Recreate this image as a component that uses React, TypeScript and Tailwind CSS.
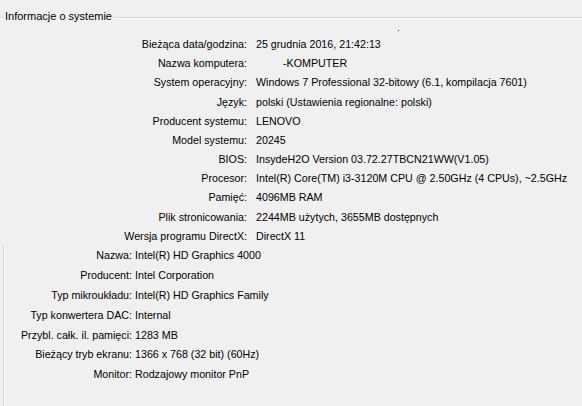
const systemRows: [string, string][] = [
  ["Bieżąca data/godzina:", "25 grudnia 2016, 21:42:13"],
  ["Nazwa komputera:", "-KOMPUTER"],
  ["System operacyjny:", "Windows 7 Professional 32-bitowy (6.1, kompilacja 7601)"],
  ["Język:", "polski (Ustawienia regionalne: polski)"],
  ["Producent systemu:", "LENOVO"],
  ["Model systemu:", "20245"],
  ["BIOS:", "InsydeH2O Version 03.72.27TBCN21WW(V1.05)"],
  ["Procesor:", "Intel(R) Core(TM) i3-3120M CPU @ 2.50GHz (4 CPUs), ~2.5GHz"],
  ["Pamięć:", "4096MB RAM"],
  ["Plik stronicowania:", "2244MB użytych, 3655MB dostępnych"],
  ["Wersja programu DirectX:", "DirectX 11"],
];

const displayRows: [string, string][] = [
  ["Nazwa:", "Intel(R) HD Graphics 4000"],
  ["Producent:", "Intel Corporation"],
  ["Typ mikroukładu:", "Intel(R) HD Graphics Family"],
  ["Typ konwertera DAC:", "Internal"],
  ["Przybl. całk. il. pamięci:", "1283 MB"],
  ["Bieżący tryb ekranu:", "1366 x 768 (32 bit) (60Hz)"],
  ["Monitor:", "Rodzajowy monitor PnP"],
];

export default function App() {
  return (
    <div className="relative h-[406px] w-[582px] overflow-hidden bg-[#f0f0f0] font-['Liberation_Sans',Arial,sans-serif] text-[10.7px] text-black">
      {/* group box header */}
      <div className="flex h-[34px] items-start pt-[10px]">
        <div className="mt-[7px] h-[2px] w-[4px] border-t border-b border-t-[#d5d5d5] border-b-white" />
        <span className="px-[1px] text-[11px] leading-[13px]">Informacje o systemie</span>
        <div className="mt-[7px] h-[2px] flex-1 border-t border-b border-t-[#d5d5d5] border-b-white" />
      </div>
      <span className="absolute left-[398px] top-[30px] h-[1px] w-[1px] bg-[#333]" />

      <div className="grid grid-cols-[247px_1fr] gap-x-[9px] pt-[0.4px]">
        {systemRows.map(([label, value]) => (
          <div key={label} className="contents">
            <div className="flex h-[19.2px] items-center justify-end whitespace-nowrap">{label}</div>
            <div className="flex h-[19.2px] items-center whitespace-nowrap">
              {value === "-KOMPUTER" ? <span className="pl-[27px]">{value}</span> : value}
            </div>
          </div>
        ))}
      </div>

      <div className="ml-[3px] mt-[1px] h-full border-l border-l-[#d5d5d5]">
        <div className="-mt-[1px] h-full border-l border-l-white">
          <div className="grid grid-cols-[127px_1fr] gap-x-[3px]">
            {displayRows.map(([label, value]) => (
              <div key={label} className="contents">
                <div className="flex h-[19.8px] items-center justify-end whitespace-nowrap">{label}</div>
                <div className="flex h-[19.8px] items-center whitespace-nowrap">{value}</div>
              </div>
            ))}
          </div>
        </div>
      </div>
    </div>
  );
}
